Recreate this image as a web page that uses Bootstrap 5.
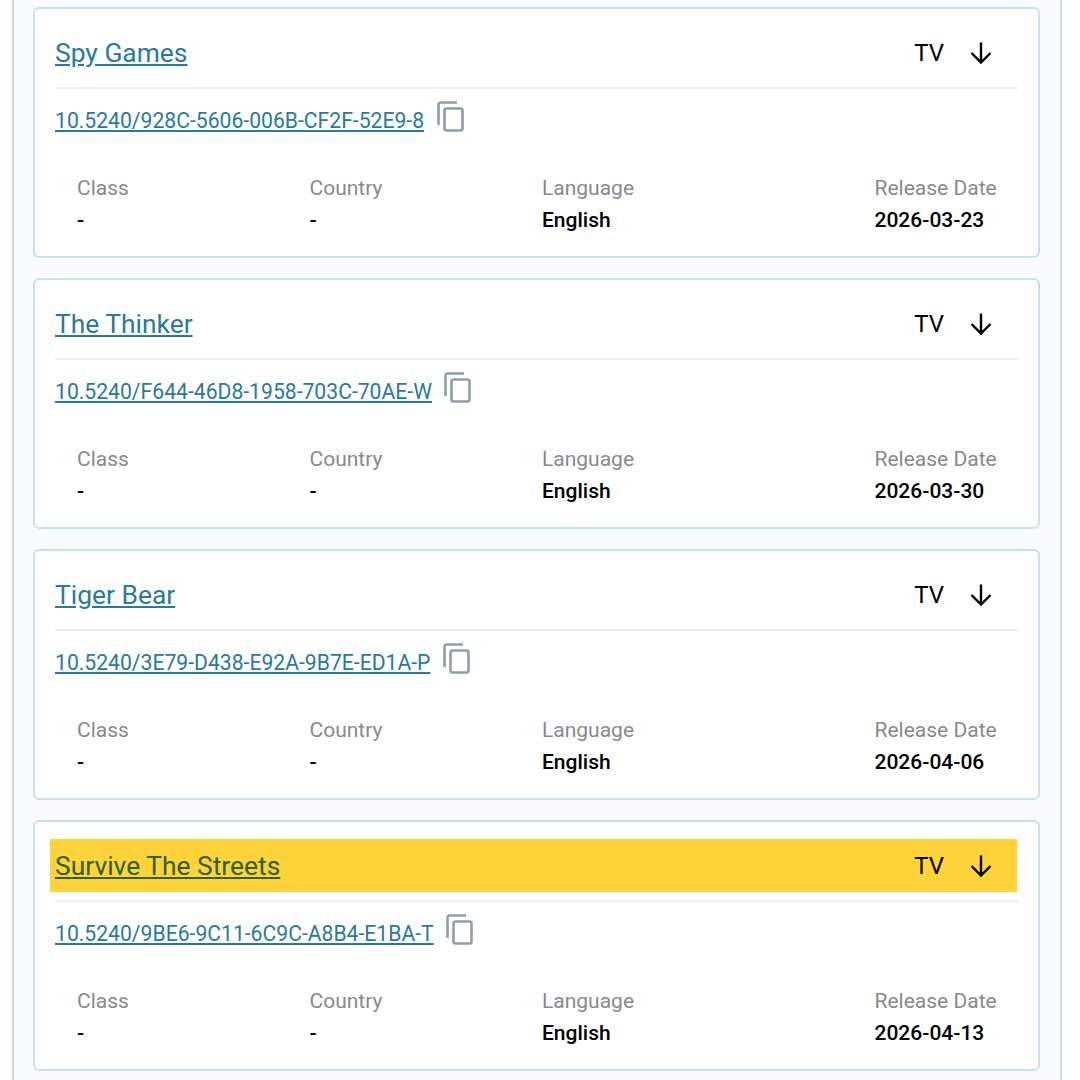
<!doctype html>
<html lang="en">
<head>
<meta charset="utf-8">
<title>Titles</title>
<link href="https://cdn.jsdelivr.net/npm/bootstrap@5.3.0/dist/css/bootstrap.min.css" rel="stylesheet">
<style>
html,body{height:1080px;overflow:hidden;background:#fff;}
body{font-family:Roboto,"Liberation Sans",sans-serif;color:#000;}
.panel-shell{margin:0 18px 0 12px;padding:7px 20px 0 19px;width:1050px;height:1080px;border-left:2px solid #c6dde3;border-right:2px solid #c6dde3;background:#f8fcfe;}
.item-card{height:251px;margin-bottom:20px;border:2px solid #c9e1e8;border-radius:6px;padding:17px 20px 0 20px;background:#fff;}
.head-row{height:53px;margin:0 1px 0 -5px;padding-left:5px;padding-right:24px;}
.head-row.flagged{background:#fed43a;}
.item-title{font-size:26.4px;line-height:30px;color:#2a7a9b;}
.flagged .item-title{color:#2f5f12;}
.kind{font-size:24px;line-height:30px;margin-right:25px;}
.item-rule{margin:8px 0 0;border:0;border-top:2px solid #eef1f2;opacity:1;}
.doi-row{height:75px;padding-top:12px;}
.doi-link{font-size:21.15px;line-height:40px;color:#2a7a9b;}
.doi-row svg{margin-left:12.5px;}
.meta-row{width:930px;margin:9px 0 0 22px;}
.meta-cell{width:232.5px;}
.meta-cell.last{padding-left:100px;}
.meta-label{font-size:21px;line-height:31px;color:#868a8e;white-space:nowrap;}
.meta-value{font-size:21px;line-height:31px;margin-top:1px;font-weight:500;white-space:nowrap;}
</style>
</head>
<body>
<div class="panel-shell">

<div class="item-card">
  <div class="head-row d-flex align-items-center justify-content-between">
    <a class="item-title" href="#">Spy Games</a>
    <div class="d-flex align-items-center"><span class="kind">TV</span>
      <svg width="24" height="24" viewBox="0 0 24 24" fill="none" stroke="#000" stroke-width="2.4"><path d="M12 1.5v20M2.5 12 12 21.5l9.5-9.5"/></svg></div>
  </div>
  <hr class="item-rule">
  <div class="doi-row d-flex align-items-start">
    <a class="doi-link" href="#">10.5240/928C-5606-006B-CF2F-52E9-8</a>
    <svg width="27" height="31" viewBox="0 0 27 31" fill="none" stroke="#8f9ea8" stroke-width="2.6"><path d="M20 1.5H3.5a2 2 0 0 0-2 2V24"/><rect x="7.5" y="7.5" width="18" height="22" rx="2"/></svg>
  </div>
  <div class="meta-row d-flex">
    <div class="meta-cell"><div class="meta-label">Class</div><div class="meta-value">-</div></div>
    <div class="meta-cell"><div class="meta-label">Country</div><div class="meta-value">-</div></div>
    <div class="meta-cell"><div class="meta-label">Language</div><div class="meta-value">English</div></div>
    <div class="meta-cell last"><div class="meta-label">Release Date</div><div class="meta-value">2026-03-23</div></div>
  </div>
</div>

<div class="item-card">
  <div class="head-row d-flex align-items-center justify-content-between">
    <a class="item-title" href="#">The Thinker</a>
    <div class="d-flex align-items-center"><span class="kind">TV</span>
      <svg width="24" height="24" viewBox="0 0 24 24" fill="none" stroke="#000" stroke-width="2.4"><path d="M12 1.5v20M2.5 12 12 21.5l9.5-9.5"/></svg></div>
  </div>
  <hr class="item-rule">
  <div class="doi-row d-flex align-items-start">
    <a class="doi-link" href="#">10.5240/F644-46D8-1958-703C-70AE-W</a>
    <svg width="27" height="31" viewBox="0 0 27 31" fill="none" stroke="#8f9ea8" stroke-width="2.6"><path d="M20 1.5H3.5a2 2 0 0 0-2 2V24"/><rect x="7.5" y="7.5" width="18" height="22" rx="2"/></svg>
  </div>
  <div class="meta-row d-flex">
    <div class="meta-cell"><div class="meta-label">Class</div><div class="meta-value">-</div></div>
    <div class="meta-cell"><div class="meta-label">Country</div><div class="meta-value">-</div></div>
    <div class="meta-cell"><div class="meta-label">Language</div><div class="meta-value">English</div></div>
    <div class="meta-cell last"><div class="meta-label">Release Date</div><div class="meta-value">2026-03-30</div></div>
  </div>
</div>

<div class="item-card">
  <div class="head-row d-flex align-items-center justify-content-between">
    <a class="item-title" href="#">Tiger Bear</a>
    <div class="d-flex align-items-center"><span class="kind">TV</span>
      <svg width="24" height="24" viewBox="0 0 24 24" fill="none" stroke="#000" stroke-width="2.4"><path d="M12 1.5v20M2.5 12 12 21.5l9.5-9.5"/></svg></div>
  </div>
  <hr class="item-rule">
  <div class="doi-row d-flex align-items-start">
    <a class="doi-link" href="#">10.5240/3E79-D438-E92A-9B7E-ED1A-P</a>
    <svg width="27" height="31" viewBox="0 0 27 31" fill="none" stroke="#8f9ea8" stroke-width="2.6"><path d="M20 1.5H3.5a2 2 0 0 0-2 2V24"/><rect x="7.5" y="7.5" width="18" height="22" rx="2"/></svg>
  </div>
  <div class="meta-row d-flex">
    <div class="meta-cell"><div class="meta-label">Class</div><div class="meta-value">-</div></div>
    <div class="meta-cell"><div class="meta-label">Country</div><div class="meta-value">-</div></div>
    <div class="meta-cell"><div class="meta-label">Language</div><div class="meta-value">English</div></div>
    <div class="meta-cell last"><div class="meta-label">Release Date</div><div class="meta-value">2026-04-06</div></div>
  </div>
</div>

<div class="item-card">
  <div class="head-row flagged d-flex align-items-center justify-content-between">
    <a class="item-title" href="#">Survive The Streets</a>
    <div class="d-flex align-items-center"><span class="kind">TV</span>
      <svg width="24" height="24" viewBox="0 0 24 24" fill="none" stroke="#000" stroke-width="2.4"><path d="M12 1.5v20M2.5 12 12 21.5l9.5-9.5"/></svg></div>
  </div>
  <hr class="item-rule">
  <div class="doi-row d-flex align-items-start">
    <a class="doi-link" href="#">10.5240/9BE6-9C11-6C9C-A8B4-E1BA-T</a>
    <svg width="27" height="31" viewBox="0 0 27 31" fill="none" stroke="#8f9ea8" stroke-width="2.6"><path d="M20 1.5H3.5a2 2 0 0 0-2 2V24"/><rect x="7.5" y="7.5" width="18" height="22" rx="2"/></svg>
  </div>
  <div class="meta-row d-flex">
    <div class="meta-cell"><div class="meta-label">Class</div><div class="meta-value">-</div></div>
    <div class="meta-cell"><div class="meta-label">Country</div><div class="meta-value">-</div></div>
    <div class="meta-cell"><div class="meta-label">Language</div><div class="meta-value">English</div></div>
    <div class="meta-cell last"><div class="meta-label">Release Date</div><div class="meta-value">2026-04-13</div></div>
  </div>
</div>

</div>
<script src="https://cdn.jsdelivr.net/npm/bootstrap@5.3.0/dist/js/bootstrap.bundle.min.js"></script>
</body>
</html>
